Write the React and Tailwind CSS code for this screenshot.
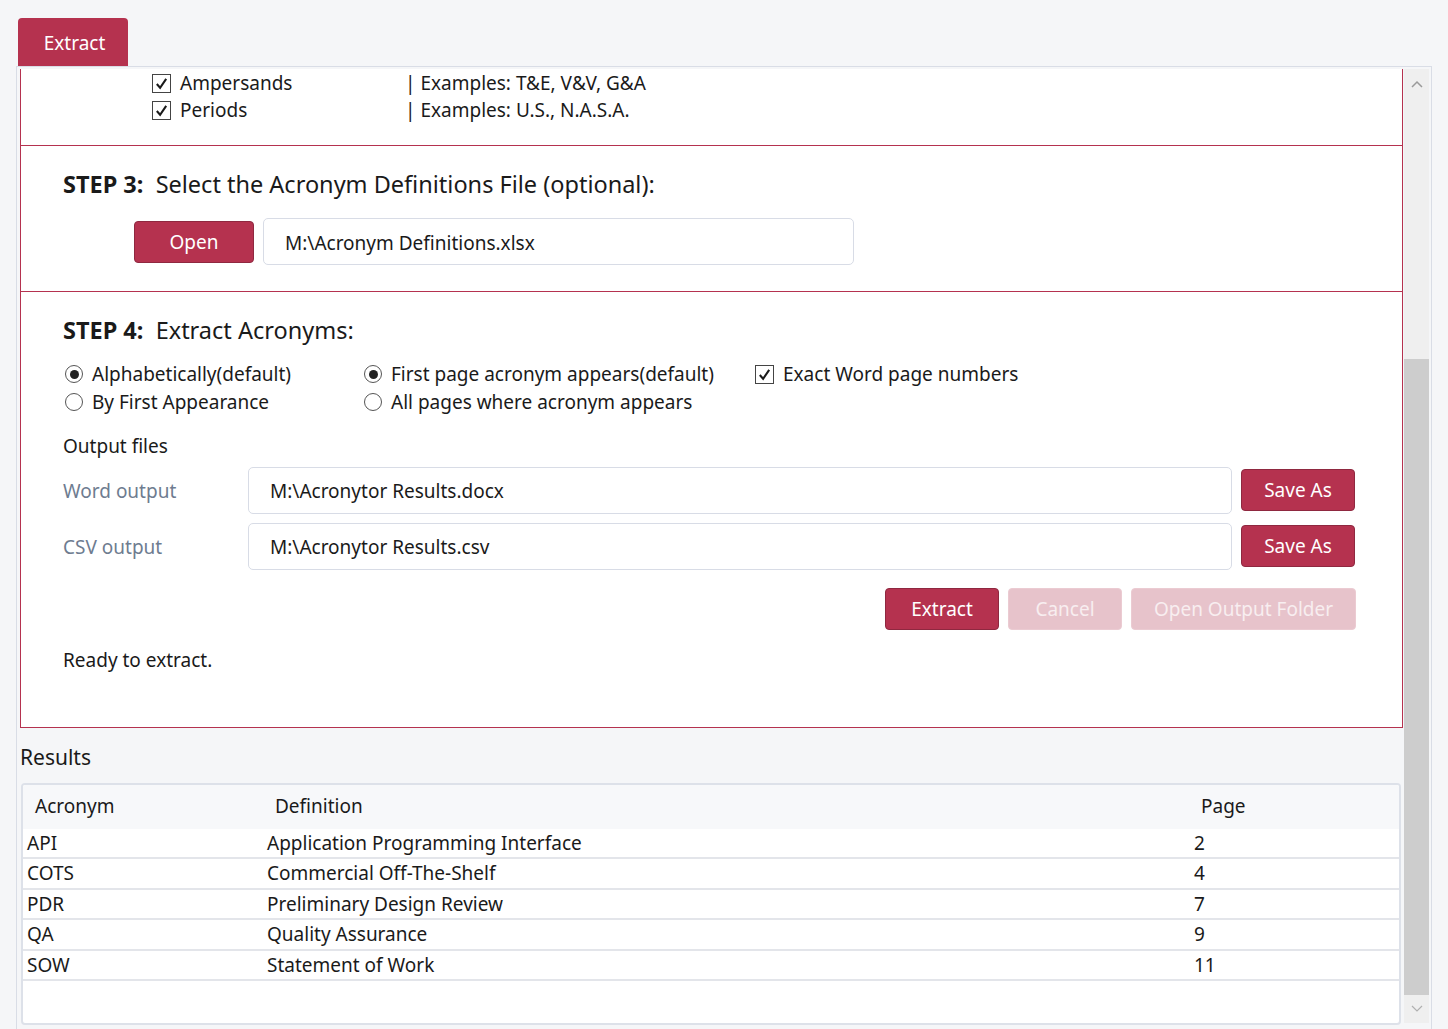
import React from 'react';

const font = { fontFamily: '"Noto Sans", "Open Sans", sans-serif' };

function Check({ checked = true }) {
  return (
    <span className="inline-flex h-[19px] w-[19px] items-center justify-center border border-[#444] bg-white">
      {checked && (
        <svg viewBox="0 0 16 16" className="h-[15px] w-[15px]">
          <path d="M3 8.5 L6.5 12.5 L13 3" fill="none" stroke="#1a1a1a" strokeWidth="2.2" />
        </svg>
      )}
    </span>
  );
}

function Radio({ checked }) {
  return (
    <span className="inline-flex h-[18px] w-[18px] items-center justify-center rounded-full border border-[#555] bg-white">
      {checked && <span className="h-[9px] w-[9px] rounded-full bg-[#222]" />}
    </span>
  );
}

function Btn({ children, className = '', disabled }) {
  return (
    <button
      className={
        'rounded-[4px] border text-[19px] ' +
        (disabled
          ? 'border-[#ebcbd2] bg-[#e7c3cb] text-[#f8eef0]'
          : 'border-[#8f2840] bg-[#b5324f] text-white') +
        ' ' +
        className
      }
    >
      {children}
    </button>
  );
}

function Field({ value, className = '' }) {
  return (
    <div className={'flex items-center rounded-[5px] border border-[#d8dce6] bg-white px-[21px] pt-[2px] text-[19px] text-[#1a1a1a] ' + className}>
      {value}
    </div>
  );
}

const rows = [
  ['API', 'Application Programming Interface', '2'],
  ['COTS', 'Commercial Off-The-Shelf', '4'],
  ['PDR', 'Preliminary Design Review', '7'],
  ['QA', 'Quality Assurance', '9'],
  ['SOW', 'Statement of Work', '11'],
];

export default function App() {
  return (
    <div className="h-[1029px] w-[1448px] overflow-hidden bg-[#f5f6f8] text-[#1a1a1a]" style={font}>
      <div className="pl-[18px] pt-[18px]">
        <div className="flex h-[48px] w-[110px] items-center justify-center rounded-t-[4px] bg-[#b5324f] pl-[3px] pt-[2px] text-[19px] text-white">
          Extract
        </div>
      </div>
      <div className="ml-[16px] flex h-[980px] w-[1416px] border border-[#d9dde6] bg-[#f5f6f8] pt-[2px] pl-[3px]">
        <div className="w-[1383px]">
          <div className="border-x border-b border-[#b5324f] bg-white">
            {/* partial section, scrolled */}
            <div className="h-[76px] pl-[131px] text-[19px]">
              <div className="flex h-[28px] items-center">
                <Check />
                <span className="ml-[9px] w-[225px]">Ampersands</span>
                <span>| Examples: T&amp;E, V&amp;V, G&amp;A</span>
              </div>
              <div className="flex h-[27px] items-center">
                <Check />
                <span className="ml-[9px] w-[225px]">Periods</span>
                <span>| Examples: U.S., N.A.S.A.</span>
              </div>
            </div>
          </div>
          <div className="h-[146px] border-x border-b border-[#b5324f] bg-white pl-[42px] pt-[21px]">
            <div className="text-[23.5px]">
              <span className="font-bold">STEP 3:</span>&nbsp; Select the Acronym Definitions File (optional):
            </div>
            <div className="mt-[16px] flex items-center pl-[71px]">
              <Btn className="h-[42px] w-[120px]">Open</Btn>
              <Field value="M:\Acronym Definitions.xlsx" className="ml-[9px] h-[47px] w-[591px]" />
            </div>
          </div>
          <div className="h-[436px] border-x border-b border-[#b5324f] bg-white pl-[42px] pt-[21px]">
            <div className="text-[23.5px]">
              <span className="font-bold">STEP 4:</span>&nbsp; Extract Acronyms:
            </div>
            <div className="mt-[12px] flex text-[19px]">
              <div className="w-[301px] pl-[2px]">
                <div className="flex h-[28px] items-center gap-[9px]"><Radio checked /><span>Alphabetically(default)</span></div>
                <div className="flex h-[28px] items-center gap-[9px]"><Radio /><span>By First Appearance</span></div>
              </div>
              <div className="w-[391px]">
                <div className="flex h-[28px] items-center gap-[9px]"><Radio checked /><span>First page acronym appears(default)</span></div>
                <div className="flex h-[28px] items-center gap-[9px]"><Radio /><span>All pages where acronym appears</span></div>
              </div>
              <div className="flex h-[28px] items-center gap-[9px]"><Check /><span>Exact Word page numbers</span></div>
            </div>
            <div className="mt-[16px] text-[19px]">Output files</div>
            <div className="mt-[6px] flex items-center text-[19px]">
              <span className="w-[185px] pt-[2px] text-[#6e7c90]">Word output</span>
              <Field value="M:\Acronytor Results.docx" className="h-[47px] w-[984px]" />
              <Btn className="ml-[9px] h-[42px] w-[114px]">Save As</Btn>
            </div>
            <div className="mt-[9px] flex items-center text-[19px]">
              <span className="w-[185px] pt-[2px] text-[#6e7c90]">CSV output</span>
              <Field value="M:\Acronytor Results.csv" className="h-[47px] w-[984px]" />
              <Btn className="ml-[9px] h-[42px] w-[114px]">Save As</Btn>
            </div>
            <div className="mt-[18px] flex justify-end gap-[9px] pr-[46px]">
              <Btn className="h-[42px] w-[114px]">Extract</Btn>
              <Btn disabled className="h-[42px] w-[114px]">Cancel</Btn>
              <Btn disabled className="h-[42px] w-[225px]">Open Output Folder</Btn>
            </div>
            <div className="mt-[16px] text-[19px]">Ready to extract.</div>
          </div>
          <div className="pt-[14px] text-[21px]">Results</div>
          <div className="mt-[9px] ml-[1px] h-[242px] w-[1380px] overflow-hidden rounded-[4px] border-2 border-[#dde1e9] bg-white text-[19px]">
            <div className="flex h-[44px] items-center bg-[#f7f8fa]">
              <span className="w-[252px] pl-[12px]">Acronym</span>
              <span className="w-[926px]">Definition</span>
              <span>Page</span>
            </div>
            {rows.map((r) => (
              <div key={r[0]} className="flex h-[30.5px] items-center border-b-2 border-[#e3e5ea]">
                <span className="w-[244px] pl-[4px]">{r[0]}</span>
                <span className="w-[927px]">{r[1]}</span>
                <span>{r[2]}</span>
              </div>
            ))}
          </div>
        </div>
        <div className="ml-[1px] flex h-[954px] w-[25px] flex-col bg-[#efefef]">
          <div className="flex h-[30px] items-center justify-center">
            <svg viewBox="0 0 12 8" className="h-[8px] w-[12px]">
              <path d="M1 7 L6 2 L11 7" fill="none" stroke="#9a9a9a" strokeWidth="1.5" />
            </svg>
          </div>
          <div className="mt-[260px] h-[636px] bg-[#cdcdcd]" />
          <div className="flex flex-1 items-center justify-center">
            <svg viewBox="0 0 12 8" className="h-[8px] w-[12px]">
              <path d="M1 1 L6 6 L11 1" fill="none" stroke="#b0b0b0" strokeWidth="1.2" />
            </svg>
          </div>
        </div>
      </div>
    </div>
  );
}
